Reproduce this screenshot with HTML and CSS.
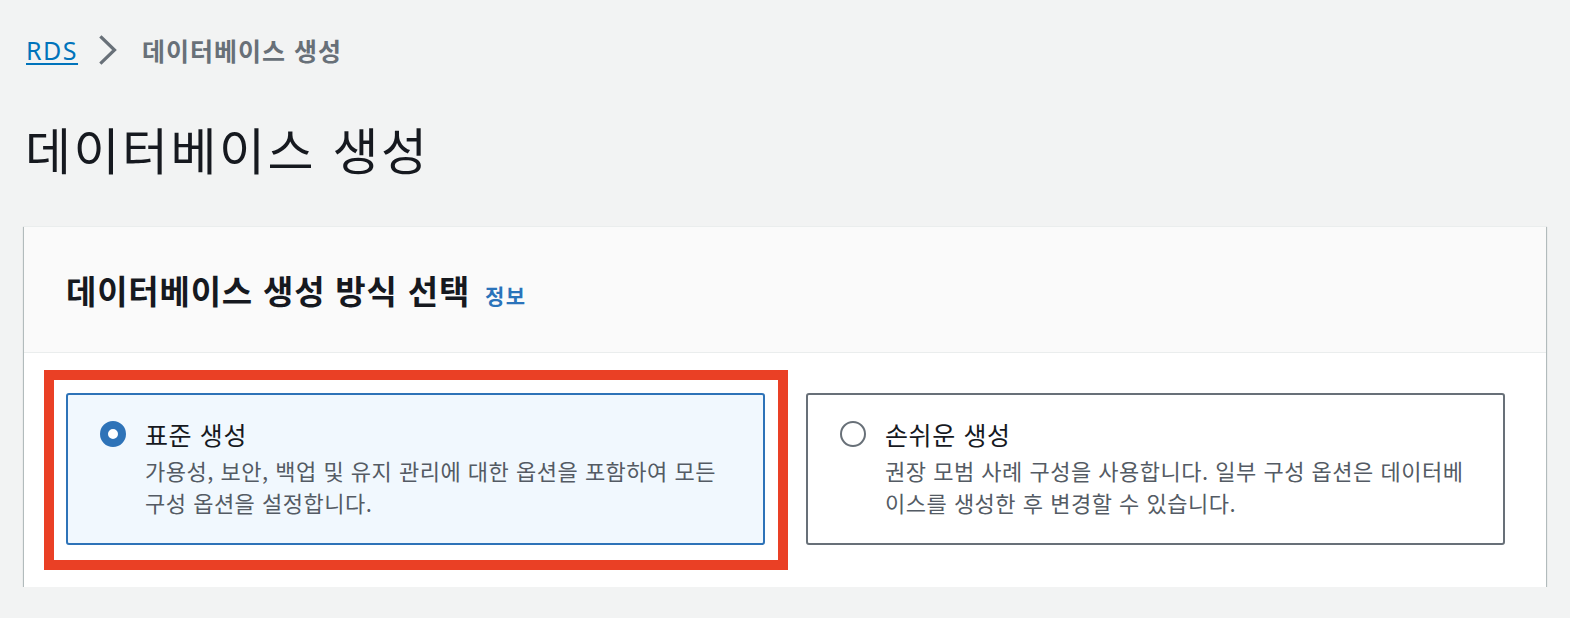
FILE: index.html
```html
<!DOCTYPE html>
<html lang="ko">
<head>
<meta charset="utf-8">
<title>데이터베이스 생성</title>
<link rel="stylesheet" href="styles.css">
</head>
<body>
<div class="page">
  <nav class="breadcrumb">
    <a class="crumb-link" href="#">RDS</a>
    <svg class="chevron" width="18" height="30" viewBox="0 0 18 30" aria-hidden="true">
      <polyline points="2.5,2.5 15.5,15 2.5,27.5" fill="none" stroke="#687078" stroke-width="3.2" stroke-linecap="square" stroke-linejoin="miter"/>
    </svg>
    <span class="crumb-current">데이터베이스 생성</span>
  </nav>
  <h1 class="page-title">데이터베이스 생성</h1>
  <section class="container">
    <header class="container-header">
      <h2 class="container-title">데이터베이스 생성 방식 선택</h2>
      <a class="info-link" href="#">정보</a>
    </header>
    <div class="container-body">
      <div class="tile tile-selected highlighted">
        <span class="radio radio-checked"></span>
        <div class="tile-text">
          <div class="tile-title">표준 생성</div>
          <div class="tile-desc">가용성, 보안, 백업 및 유지 관리에 대한 옵션을 포함하여 모든 구성 옵션을 설정합니다.</div>
        </div>
      </div>
      <div class="tile">
        <span class="radio"></span>
        <div class="tile-text">
          <div class="tile-title">손쉬운 생성</div>
          <div class="tile-desc">권장 모범 사례 구성을 사용합니다. 일부 구성 옵션은 데이터베이스를 생성한 후 변경할 수 있습니다.</div>
        </div>
      </div>
    </div>
  </section>
</div>
</body>
</html>
```
FILE: styles.css
```css
* { box-sizing: border-box; }
html, body {
  margin: 0;
  padding: 0;
  background: #f2f3f3;
}
body {
  font-family: "Noto Sans", "Noto Sans CJK KR", sans-serif;
  color: #16191f;
}
.page {
  padding: 34px 24px 0 24px;
}
.breadcrumb {
  display: flex;
  align-items: center;
  height: 32px;
  font-size: 25px;
  line-height: 32px;
}
.crumb-link {
  color: #0073bb;
  text-decoration: underline;
  text-underline-offset: 3px;
  text-decoration-thickness: 2px;
  padding-left: 2px;
  letter-spacing: 1.5px;
}
.chevron {
  margin-left: 21px;
  margin-right: 25px;
  flex: none;
}
.crumb-current {
  color: #687078;
  font-weight: 700;
  letter-spacing: 1px;
  font-family: "Noto Sans CJK KR", sans-serif;
}
.page-title {
  margin: 54px 0 0 0;
  font-size: 50px;
  line-height: 56px;
  font-weight: 400;
  letter-spacing: 2.5px;
  font-family: "Noto Sans CJK KR", sans-serif;
  padding-left: 1px;
}
.container {
  margin-top: 50px;
  background: #ffffff;
  border-top: 1px solid #eaeded;
  box-shadow: 0 1px 1px 0 rgba(0, 28, 36, 0.45), 1px 1px 1px 0 rgba(0, 28, 36, 0.2), -1px 1px 1px 0 rgba(0, 28, 36, 0.2);
}
.container-header {
  display: flex;
  align-items: baseline;
  background: #fafafa;
  border-bottom: 1px solid #eaeded;
  padding: 43px 42px 42px 42px;
}
.container-title {
  margin: 0;
  font-size: 33px;
  line-height: 40px;
  font-weight: 700;
  letter-spacing: 0.8px;
  font-family: "Noto Sans CJK KR", sans-serif;
}
.info-link {
  margin-left: 15px;
  font-size: 21px;
  font-weight: 700;
  letter-spacing: 1.5px;
  color: #2a73ba;
  text-decoration: none;
  font-family: "Noto Sans CJK KR", sans-serif;
}
.container-body {
  display: grid;
  grid-template-columns: 1fr 1fr;
  column-gap: 41px;
  padding: 40px 41px 42px 42px;
}
.tile {
  position: relative;
  display: flex;
  align-items: flex-start;
  border: 2px solid #687078;
  border-radius: 3px;
  padding: 23px 32px 25px 32px;
  background: #ffffff;
  font-family: "Noto Sans CJK KR", sans-serif;
}
.tile-selected {
  border-color: #2e73b8;
  background: #f1f8fe;
}
.highlighted::after {
  content: "";
  position: absolute;
  top: -25px;
  left: -24px;
  right: -25px;
  bottom: -27px;
  border: 10px solid #ea4025;
  pointer-events: none;
}
.radio {
  flex: none;
  width: 26px;
  height: 26px;
  border-radius: 50%;
  border: 2px solid #687078;
  background: #ffffff;
  margin-top: 3px;
}
.radio-checked {
  border: 8px solid #2e73b8;
}
.tile-text {
  margin-left: 19px;
  min-width: 0;
}
.tile-title {
  font-size: 25px;
  line-height: 32px;
  letter-spacing: 0.6px;
  color: #16191f;
}
.tile-desc {
  margin-top: 4px;
  font-size: 22px;
  line-height: 32px;
  letter-spacing: 0.5px;
  color: #545b64;
}
```
